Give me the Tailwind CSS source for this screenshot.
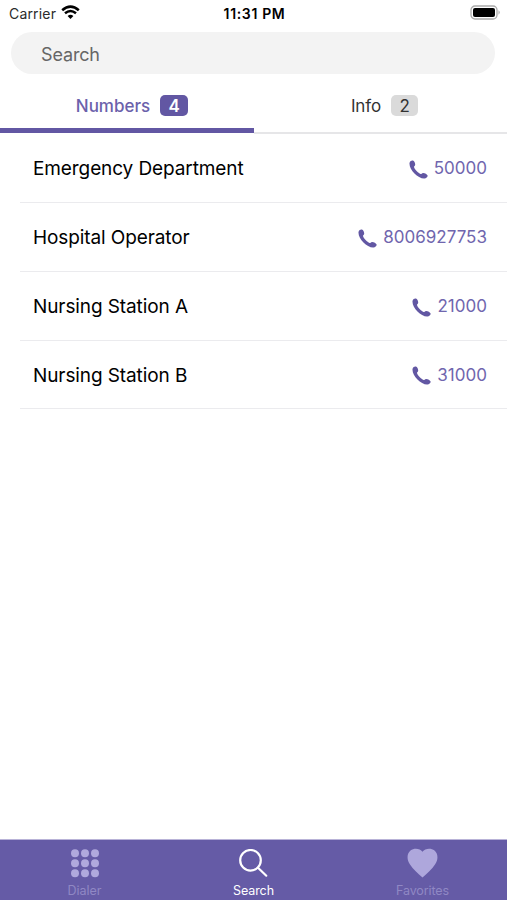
<!DOCTYPE html>
<html lang="en">
<head>
<meta charset="utf-8">
<title>Search</title>
<script src="https://cdn.jsdelivr.net/npm/@tailwindcss/browser@4"></script>
</head>
<body class="bg-white font-['Inter','Liberation_Sans',sans-serif] text-black">
<svg class="hidden">
  <symbol id="phone" viewBox="0 0 20 20">
    <path d="M.6 2.800C1.200 1 2.900.2 4.100.6 5.600 1.200 6.700 3.500 6.500 5 6.400 6.200 5.200 6.400 5.300 7.400 5.800 9.800 9.800 13.900 12.200 14.700 13.200 15 13.600 13.800 14.700 13.600 16.300 13.400 19.200 15 19.600 16.300 19.800 17.600 18.100 19.200 16.300 19.500 9.500 20-.6 9.500.6 2.800Z" fill="#6257a3"/>
  </symbol>
</svg>
<div class="flex h-[900px] w-[507px] flex-col overflow-hidden">
  <header class="grid h-8 grid-cols-3 items-center px-[9px] pb-[5px]">
    <div class="flex items-center gap-[5px]">
      <span class="text-[14px] leading-4 tracking-[0.17px] text-[#2b2b2b]">Carrier</span>
      <svg class="h-[15px] w-[19px] -translate-y-px" viewBox="0 0 19 15" fill="none" stroke="#000">
        <path d="M1.200 5.200Q9.500-1.900 17.800 5.200" stroke-width="2.600"/>
        <path d="M4 8.300Q9.500 3.700 15 8.300" stroke-width="2.500"/>
        <path d="M6.600 10.900Q9.500 8.500 12.400 10.900L9.500 14Z" fill="#000" stroke="none"/>
      </svg>
    </div>
    <span class="pl-[2px] text-center text-[14px] leading-4 font-semibold tracking-[0.65px] whitespace-nowrap">11:31 PM</span>
    <svg class="mr-[-3px] h-[15px] w-[31px] justify-self-end -translate-y-px" viewBox="0 0 31 15">
      <rect x="1" y="1" width="26" height="13" rx="4" fill="#fff" stroke="#aaa" stroke-width="1.300"/>
      <rect x="3" y="3" width="22" height="9" rx="2" fill="#000"/>
      <path d="M28.500 5.300Q31 7.500 28.500 9.700Z" fill="#aaa"/>
    </svg>
  </header>
  <div class="ml-[11px] flex h-[42px] w-[484px] items-center rounded-full bg-[#f3f3f3] pt-1 pl-[30px]">
    <span class="text-[18px] leading-6 tracking-[-0.15px] text-[#666]">Search</span>
  </div>
  <nav class="flex h-[60px] text-[17px] leading-[22px]">
    <div class="mb-px flex w-[254px] items-start justify-center border-b-[5px] border-[#6257a3] pt-[21px] pl-[10px]">
      <span class="font-medium text-[#6b61ab]">Numbers</span>
      <span class="ml-[10px] h-[21px] w-[28px] rounded-[5px] bg-[#6257a3] text-center font-semibold text-white">4</span>
    </div>
    <div class="flex flex-1 items-start justify-center border-b-2 border-[#e6e6e8] pt-[21px] pl-2">
      <span class="tracking-[-0.1px] text-[#333]">Info</span>
      <span class="ml-[10px] h-[21px] w-[27px] rounded-[5px] bg-[#dadada] text-center text-[#333]">2</span>
    </div>
  </nav>
  <main class="flex-1 pl-[20px]">
    <div class="flex h-[69px] items-center border-b border-[#ebebee] pr-5 pl-[13px]">
      <span class="translate-y-px text-[19px] leading-6 tracking-[-0.1px]">Emergency Department</span>
      <svg class="mr-[6px] ml-auto size-[19px] translate-y-px"><use href="#phone"/></svg><span class="text-[17px] leading-6 tracking-[0.02px] text-[#7066ae]">50000</span>
    </div>
    <div class="flex h-[69px] items-center border-b border-[#ebebee] pr-5 pl-[13px]">
      <span class="translate-y-px text-[19px] leading-6 tracking-[-0.1px]">Hospital Operator</span>
      <svg class="mr-[6px] ml-auto size-[19px] translate-y-px"><use href="#phone"/></svg><span class="text-[17px] leading-6 tracking-[0.02px] text-[#7066ae]">8006927753</span>
    </div>
    <div class="flex h-[69px] items-center border-b border-[#ebebee] pr-5 pl-[13px]">
      <span class="translate-y-px text-[19px] leading-6 tracking-[-0.1px]">Nursing Station A</span>
      <svg class="mr-[6px] ml-auto size-[19px] translate-y-px"><use href="#phone"/></svg><span class="text-[17px] leading-6 tracking-[0.02px] text-[#7066ae]">21000</span>
    </div>
    <div class="flex h-[68px] items-center border-b border-[#ebebee] pr-5 pl-[13px]">
      <span class="translate-y-px text-[19px] leading-6 tracking-[-0.1px]">Nursing Station B</span>
      <svg class="mr-[6px] ml-auto size-[19px] translate-y-px"><use href="#phone"/></svg><span class="text-[17px] leading-6 tracking-[0.02px] text-[#7066ae]">31000</span>
    </div>
  </main>
  <footer class="grid h-[61px] shrink-0 grid-cols-3 border-t border-[#b9b3d8] bg-[#655ba6] text-[12.500px] leading-4">
    <div class="flex flex-col items-center pt-[9px] text-[#9088c4]">
      <svg class="h-[29px] w-7" viewBox="0 0 28 29" fill="#b0a9dd">
        <circle cx="4" cy="4.300" r="4"/><circle cx="14" cy="4.300" r="4"/><circle cx="24" cy="4.300" r="4"/>
        <circle cx="4" cy="14.300" r="4"/><circle cx="14" cy="14.300" r="4"/><circle cx="24" cy="14.300" r="4"/>
        <circle cx="4" cy="24.300" r="4"/><circle cx="14" cy="24.300" r="4"/><circle cx="24" cy="24.300" r="4"/>
      </svg>
      <span class="mt-[5px]">Dialer</span>
    </div>
    <div class="flex flex-col items-center pt-[9px] text-white">
      <svg class="h-[29px] w-[29px]" viewBox="0 0 29 29" fill="none" stroke="#fff" stroke-width="2.200">
        <circle cx="11.500" cy="11.300" r="10.300"/><path d="M19 18.800L27.300 26.700" stroke-linecap="round"/>
      </svg>
      <span class="mt-[5px] tracking-[-0.1px]">Search</span>
    </div>
    <div class="flex flex-col items-center pt-[8px] text-[#9088c4]">
      <svg class="h-[30px] w-[31px]" viewBox="0 0 31 30" fill="#aea7dc">
        <path d="M15.500 3.800C18 .3 24-.2 27.500 2.500 31.500 5.800 31.200 12 28 16.500 25 21.200 20 25.500 15.500 29.500 11 25.500 6 21.200 3 16.500-.2 12-.5 5.800 3.500 2.500 7-.2 13 .3 15.500 3.800Z"/>
      </svg>
      <span class="mt-[5px] tracking-[-0.1px]">Favorites</span>
    </div>
  </footer>
</div>
</body>
</html>
